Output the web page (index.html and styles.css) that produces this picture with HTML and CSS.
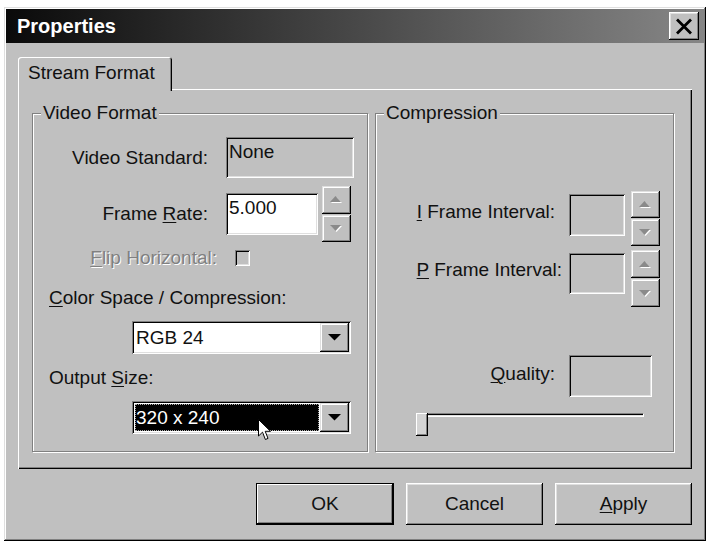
FILE: index.html
```html
<!DOCTYPE html>
<html>
<head>
    <meta charset="UTF-8">
    <meta name="viewport" content="width=device-width, initial-scale=1.0">
    <title>Properties</title>
    <link rel="stylesheet" href="styles.css">
</head>
<body>
    <div class="window">
        <div class="titlebar">
            <span class="title">Properties</span>
            <button class="close-btn" aria-label="Close">
                <svg width="18" height="17" viewBox="0 0 18 17"><path d="M2 1.5 L16 15.5 M16 1.5 L2 15.5" stroke="#000" stroke-width="2.8" fill="none"/></svg>
            </button>
        </div>
        <div class="content">
            <div class="tabs">
                <div class="tab">Stream Format</div>
            </div>
            <div class="panel">
                <div class="group video">
                    <div class="group-title">Video Format</div>

                    <div class="row row-std">
                        <label class="lbl">Video Standard:</label>
                        <div class="edit edit-std readonly">None</div>
                    </div>

                    <div class="row row-rate">
                        <label class="lbl">Frame <u>R</u>ate:</label>
                        <div class="edit edit-rate">5.000</div>
                        <div class="spin spin-rate">
                            <div class="spin-btn"><svg width="15" height="9" viewBox="0 0 15 9"><polygon points="2,8 7.5,2 13,8" fill="#fff"/><polygon points="1,7 6.5,1 12,7" fill="#8a8a8a"/></svg></div>
                            <div class="spin-btn"><svg width="15" height="9" viewBox="0 0 15 9"><polygon points="2,2 7.5,8 13,2" fill="#fff"/><polygon points="1,1 6.5,7 12,1" fill="#8a8a8a"/></svg></div>
                        </div>
                    </div>

                    <div class="row row-flip">
                        <label class="lbl lbl-flip disabled"><u>F</u>lip Horizontal:</label>
                        <span class="checkbox"></span>
                    </div>

                    <div class="text-row">
                        <label><u>C</u>olor Space / Compression:</label>
                    </div>
                    <div class="combo-row">
                        <div class="combo">
                            <span class="combo-text">RGB 24</span>
                            <span class="combo-btn"><svg width="13" height="7" viewBox="0 0 13 7"><polygon points="0,0 13,0 6.5,6.5" fill="#000"/></svg></span>
                        </div>
                    </div>

                    <div class="text-row">
                        <label>Output <u>S</u>ize:</label>
                    </div>
                    <div class="combo-row">
                        <div class="combo">
                            <span class="combo-text selected">320 x 240</span>
                            <span class="combo-btn"><svg width="13" height="7" viewBox="0 0 13 7"><polygon points="0,0 13,0 6.5,6.5" fill="#000"/></svg></span>
                            <svg class="cursor" width="14" height="23" viewBox="0 0 14 23"><path d="M0.5 0.5 L0.5 17 L4.5 13.2 L7.4 20.5 L10 19.4 L7.2 12.3 L12.5 12.3 Z" fill="#fff" stroke="#000" stroke-width="1"/></svg>
                        </div>
                    </div>
                </div>

                <div class="group compression">
                    <div class="group-title">Compression</div>

                    <div class="crow crow-i">
                        <label class="clbl"><u>I</u> Frame Interval:</label>
                        <div class="edit edit-int readonly"></div>
                        <div class="spin spin-i">
                            <div class="spin-btn"><svg width="15" height="9" viewBox="0 0 15 9"><polygon points="2,8 7.5,2 13,8" fill="#fff"/><polygon points="1,7 6.5,1 12,7" fill="#8a8a8a"/></svg></div>
                            <div class="spin-btn"><svg width="15" height="9" viewBox="0 0 15 9"><polygon points="2,2 7.5,8 13,2" fill="#fff"/><polygon points="1,1 6.5,7 12,1" fill="#8a8a8a"/></svg></div>
                        </div>
                    </div>

                    <div class="crow crow-p">
                        <label class="clbl"><u>P</u> Frame Interval:</label>
                        <div class="edit edit-int readonly"></div>
                        <div class="spin spin-p">
                            <div class="spin-btn"><svg width="15" height="9" viewBox="0 0 15 9"><polygon points="2,8 7.5,2 13,8" fill="#fff"/><polygon points="1,7 6.5,1 12,7" fill="#8a8a8a"/></svg></div>
                            <div class="spin-btn"><svg width="15" height="9" viewBox="0 0 15 9"><polygon points="2,2 7.5,8 13,2" fill="#fff"/><polygon points="1,1 6.5,7 12,1" fill="#8a8a8a"/></svg></div>
                        </div>
                    </div>

                    <div class="crow crow-q">
                        <label class="clbl"><u>Q</u>uality:</label>
                        <div class="edit edit-q readonly"></div>
                    </div>

                    <div class="slider">
                        <div class="track"></div>
                        <div class="thumb"></div>
                    </div>
                </div>
            </div>

            <div class="buttons">
                <button class="btn default">OK</button>
                <button class="btn">Cancel</button>
                <button class="btn"><u>A</u>pply</button>
            </div>
        </div>
    </div>
</body>
</html>
```

FILE: styles.css
```css
body {
    margin: 0;
    background-color: #fff;
    font-family: "Liberation Sans", Arial, sans-serif;
    font-size: 19px;
    color: #111;
}
u {
    text-decoration-thickness: 1px;
    text-underline-offset: 2px;
}
.window {
    width: 702px;
    height: 534px;
    margin: 7px 0 0 4px;
    padding: 2px;
    box-sizing: border-box;
    background-color: #c0c0c0;
    box-shadow: inset -1px -1px #000, inset 1px 1px #dfdfdf, inset -2px -2px #808080, inset 2px 2px #fff;
}
.titlebar {
    height: 34px;
    display: flex;
    align-items: center;
    justify-content: space-between;
    padding: 0 5px 0 11px;
    background: linear-gradient(to right, #0a0a0a, #868686);
    color: #fff;
}
.title {
    font-weight: bold;
    font-size: 20px;
}
.close-btn {
    width: 30px;
    height: 28px;
    padding: 0;
    border: none;
    background-color: #c0c0c0;
    display: flex;
    align-items: center;
    justify-content: center;
    box-shadow: inset -1px -1px #000, inset 1px 1px #fff, inset -2px -2px #808080, inset 2px 2px #dfdfdf;
}
.content {
    padding: 14px 12px 0 12px;
}

/* tab strip */
.tabs {
    display: flex;
    height: 32px;
}
.tab {
    position: relative;
    z-index: 1;
    width: 154px;
    height: 34px;
    box-sizing: border-box;
    padding-left: 10px;
    line-height: 32px;
    background-color: #c0c0c0;
    border-radius: 3px 3px 0 0;
    box-shadow: inset 1px 1px #fff, inset -1px 0 #000, inset -2px 0 #808080;
}
.panel {
    height: 380px;
    box-sizing: border-box;
    padding: 24px 18px 17px 14px;
    display: flex;
    gap: 7px;
    box-shadow: inset 1px 1px #fff, inset -1px -1px #000, inset -2px -2px #808080;
}

/* group boxes */
.group {
    border: 1px solid #808080;
    box-shadow: inset 1px 1px #fff, 1px 1px #fff;
}
.video {
    width: 336px;
    box-sizing: border-box;
}
.compression {
    flex: 1;
}
.group-title {
    display: table;
    margin: -12px 0 0 8px;
    padding: 0 2px;
    line-height: 22px;
    background-color: #c0c0c0;
}

/* common controls */
.edit {
    box-sizing: border-box;
    padding: 4px 3px;
    line-height: 22px;
    background-color: #fff;
    box-shadow: inset 1px 1px #808080, inset -1px -1px #fff, inset 2px 2px #000, inset -2px -2px #dfdfdf;
}
.edit.readonly {
    background-color: #c0c0c0;
}
.spin {
    display: flex;
    flex-direction: column;
    gap: 1px;
    width: 29px;
}
.spin-btn {
    flex: 1;
    display: flex;
    align-items: center;
    justify-content: center;
    background-color: #c0c0c0;
    box-shadow: inset -1px -1px #000, inset 1px 1px #dfdfdf, inset -2px -2px #808080, inset 2px 2px #fff;
}
.disabled {
    color: #808080;
    text-shadow: 1px 1px 0 #fff;
}

/* video format */
.row {
    display: flex;
    align-items: center;
}
.lbl {
    width: 175px;
    margin-right: 18px;
    text-align: right;
}
.row-std {
    margin-top: 13px;
    height: 41px;
}
.edit-std {
    width: 128px;
    height: 41px;
}
.row-rate {
    margin-top: 8px;
    height: 56px;
}
.edit-rate {
    width: 92px;
    height: 42px;
}
.spin-rate {
    height: 56px;
    margin-left: 4px;
}
.row-flip {
    margin-top: 4px;
    height: 24px;
}
.lbl-flip {
    width: 184px;
}
.checkbox {
    width: 15px;
    height: 16px;
    box-sizing: border-box;
    background-color: #c0c0c0;
    box-shadow: inset 1px 1px #808080, inset -1px -1px #fff, inset 2px 2px #000, inset -2px -2px #dfdfdf;
}
.text-row {
    margin-top: 17px;
    padding-left: 16px;
    line-height: 22px;
}
.text-row + .combo-row + .text-row {
    margin-top: 13px;
}
.combo-row {
    margin-top: 12px;
    padding-left: 99px;
}
.combo {
    position: relative;
    width: 219px;
    height: 33px;
    box-sizing: border-box;
    padding: 2px;
    display: flex;
    background-color: #fff;
    box-shadow: inset 1px 1px #808080, inset -1px -1px #fff, inset 2px 2px #000, inset -2px -2px #dfdfdf;
}
.combo-text {
    flex: 1;
    padding-left: 2px;
    line-height: 29px;
}
.combo-text.selected {
    margin: 1px;
    padding-left: 1px;
    line-height: 27px;
    background-color: #000;
    color: #fff;
    outline: 1px dotted #aaa;
    outline-offset: -1px;
}
.combo-btn {
    width: 29px;
    display: flex;
    align-items: center;
    justify-content: center;
    background-color: #c0c0c0;
    box-shadow: inset -1px -1px #000, inset 1px 1px #dfdfdf, inset -2px -2px #808080, inset 2px 2px #fff;
}
.cursor {
    position: absolute;
    left: 126px;
    top: 18px;
}

/* compression */
.crow {
    display: flex;
    align-items: flex-start;
    justify-content: flex-end;
    padding-right: 13px;
}
.clbl {
    line-height: 22px;
}
.crow-i {
    margin-top: 67px;
}
.crow-i .clbl {
    margin: 10px 14px 0 0;
}
.crow-p {
    margin-top: 4px;
}
.crow-p .clbl {
    margin: 9px 7px 0 0;
}
.edit-int {
    width: 56px;
    height: 42px;
    margin-top: 3px;
}
.crow-p .edit-int {
    height: 41px;
}
.spin-i {
    height: 55px;
    margin-left: 6px;
}
.spin-p {
    height: 57px;
    margin-left: 6px;
}
.crow-q {
    margin-top: 48px;
    padding-right: 21px;
}
.crow-q .clbl {
    margin: 8px 14px 0 0;
}
.edit-q {
    width: 83px;
    height: 42px;
}
.slider {
    position: relative;
    width: 229px;
    height: 23px;
    margin: 16px 0 0 40px;
}
.track {
    width: 225px;
    height: 4px;
    margin: 9px 0 0 3px;
    box-sizing: border-box;
    border-top: 1px solid #808080;
    border-left: 1px solid #808080;
    border-bottom: 1px solid #fff;
    border-right: 1px solid #fff;
    box-shadow: inset 1px 1px #000, inset -1px -1px #dfdfdf;
}
.thumb {
    position: absolute;
    left: 0;
    top: 0;
    width: 12px;
    height: 23px;
    background-color: #d4d4d4;
    box-shadow: inset -1px -1px #000, inset 1px 1px #fff, inset -2px -2px #808080;
}

/* dialog buttons */
.buttons {
    display: flex;
    justify-content: flex-end;
    gap: 12px;
    margin-top: 14px;
}
.btn {
    width: 137px;
    height: 42px;
    padding: 0;
    border: none;
    background-color: #c0c0c0;
    font-family: inherit;
    font-size: 19px;
    color: #111;
    box-shadow: inset -1px -1px #000, inset 1px 1px #fff, inset -2px -2px #808080, inset 2px 2px #dfdfdf;
}
.btn.default {
    width: 138px;
    box-shadow: inset 0 0 0 1px #000, inset -2px -2px #000, inset 2px 2px #fff, inset -3px -3px #808080;
}
```
